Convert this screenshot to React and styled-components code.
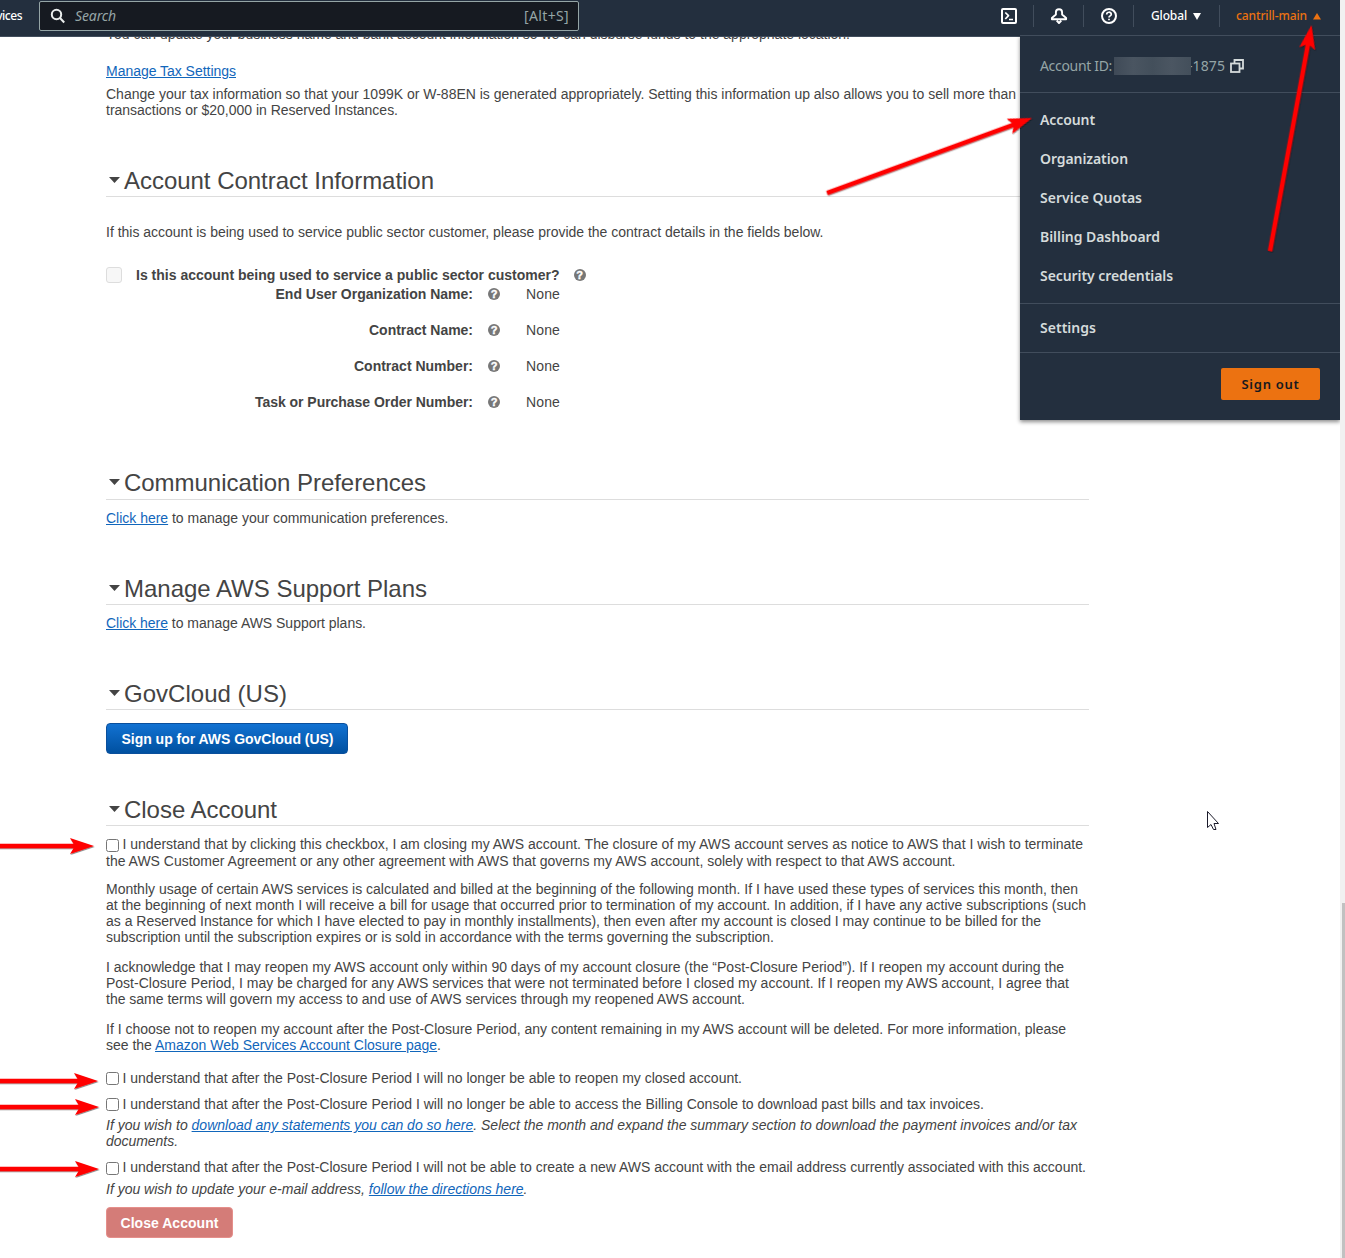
import React, { useLayoutEffect, useRef, useState } from "react";
import styled, { createGlobalStyle, css } from "styled-components";

const Global = createGlobalStyle`
  * { box-sizing: border-box; }
  html, body { margin: 0; background: #fff; }
  body { font: 14px/16px "Liberation Sans", Arial, sans-serif; color: #444; overflow: hidden; }
`;

const ember = css`font-family: "Noto Sans", "Open Sans", sans-serif;`;

const Page = styled.div`
  display: flex;
  width: 1345px;
  height: 1258px;
  overflow: hidden;
  position: relative;
`;
const View = styled.div`
  width: 1340px;
  display: flex;
  flex-direction: column;
`;
const ScrollTrack = styled.div`
  width: 5px;
  background: #f1f1f1;
  padding: 903px 0 0 2px;
`;
const ScrollThumb = styled.div`
  height: 355px;
  background: #c1c1c1;
`;

/* Text set to a given measure by spreading the difference over its letters */
const Measured = styled.span`
  display: inline-block;
  white-space: nowrap;
`;
function Fit({ w, children }) {
  const ref = useRef(null);
  const [spacing, setSpacing] = useState(0);
  useLayoutEffect(() => {
    const el = ref.current;
    setSpacing((w - el.getBoundingClientRect().width) / el.textContent.length);
  }, [w]);
  return <Measured ref={ref} style={{ letterSpacing: spacing }}>{children}</Measured>;
}

const Header = styled.header`
  ${ember}
  flex: none;
  height: 37px;
  padding-bottom: 4px;
  background: #232f3e;
  border-bottom: 1px solid #414d5c;
  display: flex;
  align-items: center;
  color: #fff;
  font-size: 12px;
  font-weight: 500;
`;
const Services = styled.div`
  width: 39px;
  overflow: hidden;
  display: flex;
  justify-content: flex-end;
  padding-right: 17px;
`;
const SearchBox = styled.div`
  width: 540px;
  height: 30px;
  border: 1px solid #95a5a6;
  border-radius: 2px;
  background: #161a21;
  color: #95a5a6;
  font-size: 14px;
  font-weight: 400;
  display: flex;
  align-items: center;
  padding: 0 9px 0 10px;
  gap: 9px;
`;
const Placeholder = styled.div`
  flex: 1;
  font-style: italic;
`;
const Tools = styled.div`
  margin-left: auto;
  display: flex;
  align-items: center;
`;
const Tool = styled.div`
  width: ${(p) => p.$w}px;
  height: 22px;
  padding-right: ${(p) => p.$right || 0}px;
  display: flex;
  align-items: center;
  justify-content: center;
  gap: 6px;
  border-left: ${(p) => (p.$first ? "0" : "1px solid #414d5c")};
  color: ${(p) => (p.$active ? "#ec7211" : "#fff")};
`;

const Content = styled.main`
  flex: 1;
  overflow: hidden;
  padding-left: 106px;
`;
const Column = styled.div`
  width: 983px;
  margin-top: -11px;
`;
const Block = styled.div`
  margin-top: ${(p) => p.$top || 0}px;
  font-style: ${(p) => (p.$italic ? "italic" : "normal")};
`;
const Row = styled.div`
  height: 16px;
  display: flex;
  align-items: flex-start;
`;
const Link = styled.a`
  color: #1166bb;
  text-decoration: underline;
`;
const Heading = styled.h2`
  margin: ${(p) => p.$top}px 0 0;
  height: 30px;
  padding: 0 0 ${(p) => p.$lift || 2}px 3px;
  border-bottom: 1px solid #ddd;
  display: flex;
  align-items: center;
  gap: 4px;
  font-size: 24px;
  line-height: 26px;
  font-weight: 400;
`;
const Caret = styled.i`
  width: 11px;
  height: 6px;
  background: #444;
  clip-path: polygon(0 0, 100% 0, 50% 100%);
  margin-bottom: 1px;
`;
const Check = styled.span`
  flex: none;
  width: 13px;
  height: 13px;
  margin: ${(p) => p.$drop || 2}px 3.5px 0 0;
  border: 1px solid #767676;
  border-radius: 2.5px;
  background: #fff;
`;
const Question = styled.div`
  height: 16px;
  margin-top: 27px;
  display: flex;
  align-items: center;
  gap: 14px;
  font-weight: 700;
`;
const DisabledCheck = styled.span`
  width: 16px;
  height: 16px;
  border: 1px solid #ddd;
  border-radius: 3px;
  background: #f7f7f7;
`;
const Fields = styled.div`
  margin-top: 3px;
`;
const Field = styled.div`
  display: grid;
  grid-template-columns: 367px 12px 1fr;
  column-gap: 15px;
  height: 36px;
  align-items: start;
`;
const Label = styled.div`
  text-align: right;
  font-weight: 700;
`;
const Value = styled.div`
  padding-left: 11px;
`;
const HelpDot = styled.span`
  width: 12px;
  height: 12px;
  margin-top: ${(p) => p.$top || 0}px;
  border-radius: 50%;
  background: #777;
  color: #fff;
  font: 700 11px/12px "Liberation Sans", Arial, sans-serif;
  -webkit-text-stroke: 0.4px #fff;
  text-align: center;
`;
const Button = styled.button`
  display: flex;
  align-items: center;
  justify-content: center;
  width: ${(p) => p.$w}px;
  height: 31px;
  margin-top: ${(p) => p.$top}px;
  padding: 0 0 0 ${(p) => (p.$danger ? 0 : 1)}px;
  border: 1px solid ${(p) => (p.$danger ? "#e58f8b" : "#0a4f9c")};
  border-radius: 4px;
  background: ${(p) => (p.$danger ? "#d47c78" : "linear-gradient(#1272d2, #0050a0)")};
  color: #fff;
  font: 700 14px/16px "Liberation Sans", Arial, sans-serif;
`;

const Menu = styled.nav`
  ${ember}
  position: absolute;
  left: 1020px;
  top: 35px;
  width: 320px;
  height: 385px;
  background: #232f3e;
  border-top: 1px solid #414d5c;
  box-shadow: 0 2px 4px rgba(0, 0, 0, 0.45);
  color: #d5dbdb;
  clip-path: inset(0 0 -10px -10px);
`;
const Account = styled.div`
  height: 57px;
  padding: 3px 20px 0;
  border-bottom: 1px solid #414d5c;
  display: flex;
  align-items: center;
  color: #95a5a6;
`;
const Redacted = styled.span`
  width: 77px;
  height: 18px;
  margin: 0 -3px 0 2px;
  z-index: 1;
  background: linear-gradient(90deg, #3f4a57, #4a5561 25%, #434f5b 50%, #4b5662 75%, #434f5b);
`;
const CopyIcon = styled.svg`
  margin-left: 5px;
`;
const Group = styled.div`
  padding: ${(p) => p.$pad};
  border-bottom: 1px solid #414d5c;
  font-weight: 600;
`;
const Item = styled.div`
  height: 39px;
  display: flex;
  align-items: center;
`;
const Footer = styled.div`
  padding: 15px 20px;
  display: flex;
  justify-content: flex-end;
`;
const SignOut = styled.button`
  ${ember}
  width: 99px;
  height: 32px;
  padding: 0;
  border: 0;
  border-radius: 2px;
  background: #ec7211;
  color: #16191f;
  font-size: 13px;
  font-weight: 600;
`;
const Overlay = styled.svg`
  position: absolute;
  left: 0;
  top: 0;
  pointer-events: none;
`;

function Arrow({ from, to }) {
  const dx = to[0] - from[0];
  const dy = to[1] - from[1];
  const len = Math.hypot(dx, dy);
  const angle = (Math.atan2(dy, dx) * 180) / Math.PI;
  return (
    <g transform={`translate(${to[0]} ${to[1]}) rotate(${angle})`} fill="#f00">
      <path d={`M${-len} -2.2 L-20.500 -2.200 L-24 -8 L0 0 L-24 8 L-20.500 2.200 L${-len} 2.200 Z`} />
    </g>
  );
}

const arrows = [
  { from: [-5, 846], to: [94, 846] },
  { from: [-5, 1081], to: [98, 1081] },
  { from: [-5, 1107], to: [99, 1107] },
  { from: [-5, 1169], to: [99, 1169] },
  { from: [827, 193], to: [1032, 118] },
  { from: [1270, 251], to: [1311.5, 25] },
];

const fields = [
  ["End User Organization Name:", 197.5],
  ["Contract Name:", 104],
  ["Contract Number:", 119],
  ["Task or Purchase Order Number:", 218],
];

const menuItems = [
  ["Account", 55],
  ["Organization", 88],
  ["Service Quotas", 102],
  ["Billing Dashboard", 120],
  ["Security credentials", 133],
];

function Lines({ top, italic, lines }) {
  return (
    <Block $top={top} $italic={italic}>
      {lines.map(([w, text], i) => (
        <Row key={i}><Fit w={w}>{text}</Fit></Row>
      ))}
    </Block>
  );
}

function Title({ top, w, lift, children }) {
  return <Heading $top={top} $lift={lift}><Caret /><Fit w={w}>{children}</Fit></Heading>;
}

export default function App() {
  return (
    <Page>
      <Global />
      <View>
        <Header>
          <Services><Fit w={43}>Services</Fit></Services>
          <SearchBox>
            <svg width="16" height="16" viewBox="0 0 16 16" fill="none" stroke="#eaeded" strokeWidth="2">
              <circle cx="6.5" cy="6.5" r="4.7" /><path d="M10 10l4.2 4.5" />
            </svg>
            <Placeholder><Fit w={41}>Search</Fit></Placeholder>
            <Fit w={45}>[Alt+S]</Fit>
          </SearchBox>
          <Tools>
            <Tool $w={49} $first>
              <svg width="18" height="18" viewBox="0 0 18 18" fill="none" stroke="#fff" strokeWidth="2" strokeLinejoin="round">
                <rect x="2" y="2" width="14" height="14" rx="1" /><path d="M5.300 5.500l3.200 3.200L5.300 12M9 12.500h4" strokeWidth="1.7" />
              </svg>
            </Tool>
            <Tool $w={50}>
              <svg width="18" height="18" viewBox="0 0 18 18" fill="none" stroke="#fff" strokeWidth="1.9" strokeLinejoin="round">
                <path d="M9 2.300C7 2.300 5.900 3.800 5.900 5.500V7.500L1.900 11V12.300H16.100V11L12.100 7.500V5.500C12.100 3.800 11 2.300 9 2.300Z" /><path d="M6.700 13.500L9 16L11.300 13.500" />
              </svg>
            </Tool>
            <Tool $w={50}>
              <svg width="18" height="18" viewBox="0 0 18 18" fill="none" stroke="#fff" strokeWidth="2">
                <circle cx="9" cy="9" r="7" /><path d="M6.700 7.500C6.700 4.500 11.300 4.500 11.300 7.300C11.300 9 9 8.800 9 10.500M9 11.700V13.300" strokeWidth="1.700" />
              </svg>
            </Tool>
            <Tool $w={86} $right={1}>
              <Fit w={36}>Global</Fit>
              <svg width="8" height="7"><path d="M0 0H8L4 7Z" fill="#fff" /></svg>
            </Tool>
            <Tool $w={121} $right={3} $active>
              <Fit w={71}>cantrill-main</Fit>
              <svg width="8" height="7"><path d="M0 6.500H8L4 0Z" fill="#ec7211" /></svg>
            </Tool>
          </Tools>
        </Header>
        <Content>
          <Column>
            <Lines lines={[[744, "You can update your business name and bank account information so we can disburse funds to the appropriate location."]]} />
            <Lines top={21} lines={[[130, <Link>Manage Tax Settings</Link>]]} />
            <Lines top={7} lines={[
              [910, "Change your tax information so that your 1099K or W-88EN is generated appropriately. Setting this information up also allows you to sell more than"],
              [292, "transactions or $20,000 in Reserved Instances."],
            ]} />
            <Title top={49} w={310}>Account Contract Information</Title>
            <Lines top={27} lines={[[717.5, "If this account is being used to service public sector customer, please provide the contract details in the fields below."]]} />
            <Question>
              <DisabledCheck />
              <Fit w={423.5}>Is this account being used to service a public sector customer?</Fit>
              <HelpDot>?</HelpDot>
            </Question>
            <Fields>
              {fields.map(([label, w]) => (
                <Field key={label}>
                  <Label><Fit w={w}>{label}</Fit></Label>
                  <HelpDot $top={2}>?</HelpDot>
                  <Value><Fit w={34}>None</Fit></Value>
                </Field>
              ))}
            </Fields>
            <Title top={40} lift={4} w={302}>Communication Preferences</Title>
            <Lines top={10} lines={[[342.5, <><Link>Click here</Link> to manage your communication preferences.</>]]} />
            <Title top={49} w={303}>Manage AWS Support Plans</Title>
            <Lines top={10} lines={[[260, <><Link>Click here</Link> to manage AWS Support plans.</>]]} />
            <Title top={49} w={163}>GovCloud (US)</Title>
            <Button $w={242} $top={13}><Fit w={212}>Sign up for AWS GovCloud (US)</Fit></Button>
            <Title top={42} w={153}>Close Account</Title>
            <Block $top={10}>
              <Row><Check $drop={3} /><Fit w={960.5}>I understand that by clicking this checkbox, I am closing my AWS account. The closure of my AWS account serves as notice to AWS that I wish to terminate</Fit></Row>
            </Block>
            <Lines top={1} lines={[[849.5, "the AWS Customer Agreement or any other agreement with AWS that governs my AWS account, solely with respect to that AWS account."]]} />
            <Lines top={12} lines={[
              [972, "Monthly usage of certain AWS services is calculated and billed at the beginning of the following month. If I have used these types of services this month, then"],
              [980, "at the beginning of next month I will receive a bill for usage that occurred prior to termination of my account. In addition, if I have any active subscriptions (such"],
              [935, "as a Reserved Instance for which I have elected to pay in monthly installments), then even after my account is closed I may continue to be billed for the"],
              [668, "subscription until the subscription expires or is sold in accordance with the terms governing the subscription."],
            ]} />
            <Lines top={14} lines={[
              [958, "I acknowledge that I may reopen my AWS account only within 90 days of my account closure (the “Post-Closure Period”). If I reopen my account during the"],
              [963, "Post-Closure Period, I may be charged for any AWS services that were not terminated before I closed my account. If I reopen my AWS account, I agree that"],
              [639, "the same terms will govern my access to and use of AWS services through my reopened AWS account."],
            ]} />
            <Lines top={14} lines={[
              [960, "If I choose not to reopen my account after the Post-Closure Period, any content remaining in my AWS account will be deleted. For more information, please"],
              [335, <>see the <Link>Amazon Web Services Account Closure page</Link>.</>],
            ]} />
            <Block $top={17}>
              <Row><Check $drop={2} /><Fit w={619.5}>I understand that after the Post-Closure Period I will no longer be able to reopen my closed account.</Fit></Row>
            </Block>
            <Block $top={10}>
              <Row><Check $drop={2} /><Fit w={861.5}>I understand that after the Post-Closure Period I will no longer be able to access the Billing Console to download past bills and tax invoices.</Fit></Row>
            </Block>
            <Lines top={5} italic lines={[
              [971, <>If you wish to <Link>download any statements you can do so here</Link>. Select the month and expand the summary section to download the payment invoices and/or tax</>],
              [72, "documents."],
            ]} />
            <Block $top={10}>
              <Row><Check $drop={3} /><Fit w={963.5}>I understand that after the Post-Closure Period I will not be able to create a new AWS account with the email address currently associated with this account.</Fit></Row>
            </Block>
            <Lines top={6} italic lines={[[421.5, <>If you wish to update your e-mail address, <Link>follow the directions here</Link>.</>]]} />
            <Button $w={127} $top={10} $danger><Fit w={98}>Close Account</Fit></Button>
          </Column>
        </Content>
      </View>
      <ScrollTrack><ScrollThumb /></ScrollTrack>
      <Menu>
        <Account>
          <Fit w={72}>Account ID:</Fit>
          <Redacted />
          <Fit w={37}>-1875</Fit>
          <CopyIcon width="14" height="14" viewBox="0 0 14 14" fill="none" stroke="#d5dbdb" strokeWidth="1.8">
            <path d="M4.500 4V1H13V9.500H10" /><rect x="1" y="4.500" width="8.500" height="8.500" />
          </CopyIcon>
        </Account>
        <Group $pad="7px 20px 8px">
          {menuItems.map(([label, w]) => <Item key={label}><Fit w={w}>{label}</Fit></Item>)}
        </Group>
        <Group $pad="4px 20px 5px"><Item><Fit w={56}>Settings</Fit></Item></Group>
        <Footer><SignOut><Fit w={58}>Sign out</Fit></SignOut></Footer>
      </Menu>
      <Overlay width="1345" height="1258" viewBox="0 0 1345 1258">
        <defs>
          <filter id="arrowShadow" filterUnits="userSpaceOnUse" x="-10" y="0" width="1360" height="1258">
            <feDropShadow dx="0.6" dy="0.9" stdDeviation="0.6" floodColor="#000" floodOpacity="0.5" />
          </filter>
        </defs>
        <g filter="url(#arrowShadow)">
          {arrows.map((a, i) => <Arrow key={i} {...a} />)}
        </g>
        <path d="M1207.500 811.500V827.500L1211 824.500L1213.500 829.500H1216L1214 823.500H1218.500Z" fill="#fff" stroke="#1a1a2a" />
      </Overlay>
    </Page>
  );
}
